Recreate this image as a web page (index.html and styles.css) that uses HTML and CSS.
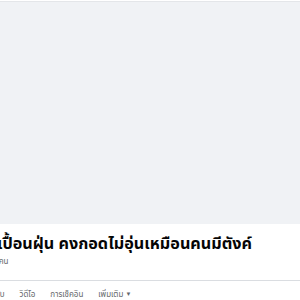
FILE: index.html
```html
<!DOCTYPE html>
<html lang="th">
<head>
<meta charset="utf-8">
<link rel="stylesheet" href="styles.css">
</head>
<body>
<div class="topbar"></div>
<div class="cover"></div>
<div class="header">
  <h1 class="title">เปื้อนฝุ่น คงกอดไม่อุ่นเหมือนคนมีตังค์</h1>
  <div class="meta">สมาชิก 1 คน</div>
  <div class="divider"></div>
  <nav class="tabs">
    <span class="tab">เกี่ยวกับ</span>
    <span class="tab">วิดีโอ</span>
    <span class="tab">การเช็คอิน</span>
    <span class="tab">เพิ่มเติม <span class="caret">▼</span></span>
  </nav>
</div>
</body>
</html>
```
FILE: styles.css
```css
html, body {
  margin: 0;
  padding: 0;
  background: #ffffff;
  font-family: "Noto Sans Thai", "Noto Sans", "Liberation Sans", sans-serif;
  overflow: hidden;
}
.topbar {
  height: 1px;
  margin-top: 1px;
  background: #e4e6e9;
}
.cover {
  height: 222px;
  background: #f0f2f5;
}
.header {
  background: #fff;
  padding-top: 8px;
}
.title {
  margin: 0 0 0 -3px;
  font-size: 16.2px;
  font-weight: 700;
  color: #050505;
  line-height: 24px;
  white-space: nowrap;
}
.meta {
  margin-left: -32px;
  font-size: 8px;
  color: #65676b;
  line-height: 12px;
}
.divider {
  height: 1px;
  background: #dadde1;
  margin-top: 12px;
}
.tabs {
  display: flex;
  gap: 15px;
  margin-left: -21px;
  padding-top: 8px;
  font-size: 8px;
  color: #65676b;
  font-weight: 400;
  white-space: nowrap;
}
.caret {
  font-size: 6px;
  vertical-align: 1px;
}
```
